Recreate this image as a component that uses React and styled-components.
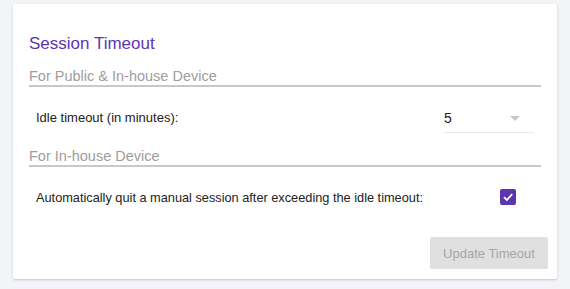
import React, { useState } from "react";
import styled, { createGlobalStyle } from "styled-components";

const GlobalStyle = createGlobalStyle`
  body {
    margin: 0;
    background: #f3f4f8;
    font-family: "Liberation Sans", Arial, sans-serif;
  }
`;

const Page = styled.div`
  padding: 4px 13px 10px 13px;
`;

const Card = styled.div`
  background: #fff;
  height: 275px;
  box-sizing: border-box;
  padding: 30px 16px 0 16px;
  box-shadow: 0 1px 3px rgba(0, 0, 0, 0.14), 0 1px 1px rgba(0, 0, 0, 0.06);
  border-radius: 2px;
  display: flex;
  flex-direction: column;
`;

const Title = styled.h2`
  margin: 0;
  font-size: 17px;
  font-weight: normal;
  line-height: 20px;
  color: #5e35b1;
`;

const SectionHeader = styled.div`
  margin-top: ${props => props.top}px;
  font-size: 14.5px;
  line-height: 18px;
  color: #9e9e9e;
  border-bottom: 2px solid #c8c8c8;
`;

const Row = styled.div`
  display: flex;
  align-items: center;
  justify-content: space-between;
  padding: 0 7px;
  height: ${props => props.h}px;
`;

const Label = styled.span`
  font-size: ${props => props.size || 13}px;
  color: #222;
`;

const Select = styled.div`
  width: 90px;
  height: 28px;
  box-sizing: border-box;
  border-bottom: 1px solid #e8e8e8;
  display: flex;
  align-items: center;
  justify-content: space-between;
  padding-right: 14px;
  margin-top: 3px;
  font-size: 14px;
  color: #222;
`;

const Arrow = styled.span`
  width: 0;
  height: 0;
  border-left: 5px solid transparent;
  border-right: 5px solid transparent;
  border-top: 5px solid #c8c8c8;
`;

const CheckBox = styled.button`
  width: 16px;
  height: 16px;
  padding: 0;
  border: none;
  border-radius: 2px;
  background: ${props => (props.checked ? "#5e35b1" : "#fff")};
  display: flex;
  align-items: center;
  justify-content: center;
  margin-right: 18px;
  cursor: pointer;
`;

const Footer = styled.div`
  display: flex;
  justify-content: flex-end;
  margin-top: auto;
  margin-right: -7px;
  margin-bottom: 10px;
`;

const Button = styled.button`
  width: 118px;
  height: 32px;
  border: none;
  border-radius: 2px;
  background: #e0e0e0;
  color: #a6a6a6;
  font-family: inherit;
  font-size: 13px;
`;

export default function App() {
  const [checked, setChecked] = useState(true);

  return (
    <Page>
      <GlobalStyle />
      <Card>
        <Title>Session Timeout</Title>
        <SectionHeader top={13}>For Public &amp; In-house Device</SectionHeader>
        <Row h={60}>
          <Label>Idle timeout (in minutes):</Label>
          <Select>
            5
            <Arrow />
          </Select>
        </Row>
        <SectionHeader top={0}>For In-house Device</SectionHeader>
        <Row h={60}>
          <Label size={12.75}>
            Automatically quit a manual session after exceeding the idle timeout:
          </Label>
          <CheckBox checked={checked} onClick={() => setChecked(!checked)}>
            {checked && (
              <svg width="12" height="12" viewBox="0 0 12 12">
                <path
                  d="M2 6.2 L4.8 9 L10.2 3.2"
                  fill="none"
                  stroke="#fff"
                  strokeWidth="1.8"
                />
              </svg>
            )}
          </CheckBox>
        </Row>
        <Footer>
          <Button disabled>Update Timeout</Button>
        </Footer>
      </Card>
    </Page>
  );
}
